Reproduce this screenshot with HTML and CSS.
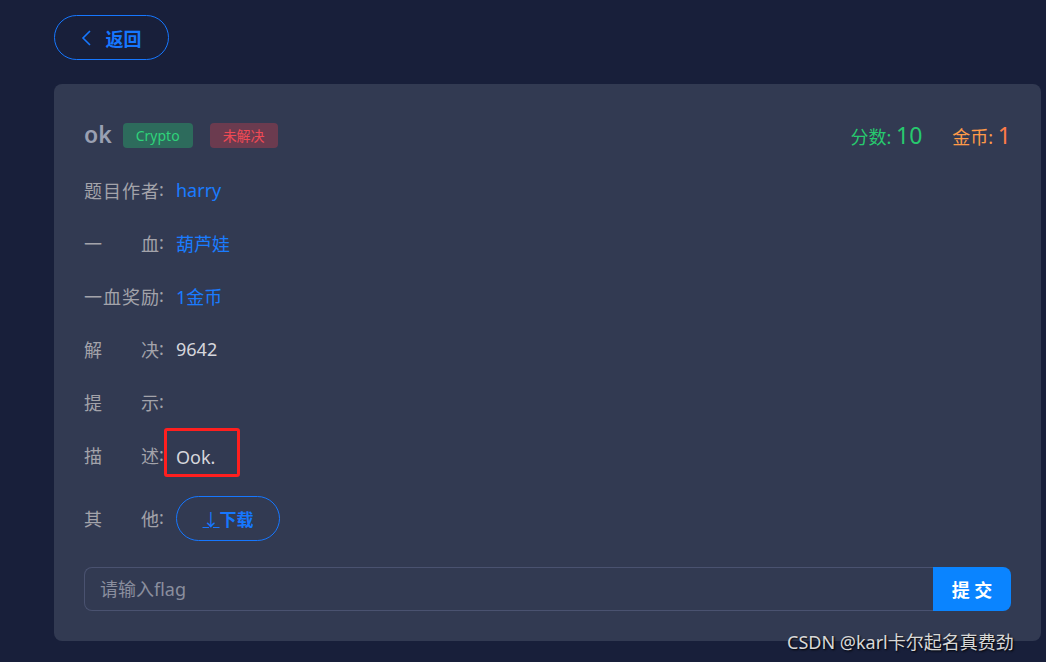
FILE: index.html
```html
<!DOCTYPE html>
<html lang="zh-CN">
<head>
    <meta charset="UTF-8">
    <meta name="viewport" content="width=device-width, initial-scale=1.0">
    <title>题目详情</title>
    <link rel="stylesheet" href="styles.css">
</head>
<body>
    <div class="page">
        <button class="btn-back">
            <svg width="14" height="18" viewBox="0 0 14 18"><path d="M10 2 L3 9 L10 16" fill="none" stroke="#1677ff" stroke-width="1.6"/></svg>
            <span>返回</span>
        </button>

        <div class="card">
            <div class="head">
                <div class="title">
                    <span class="name">ok</span>
                    <span class="tag tag-type">Crypto</span>
                    <span class="tag tag-state">未解决</span>
                </div>
                <div class="stats">
                    <span class="score">分数: <b>10</b></span>
                    <span class="coin">金币: <b>1</b></span>
                </div>
            </div>

            <div class="row"><span class="label"><i>题目作者</i>:</span><span class="val link">harry</span></div>
            <div class="row"><span class="label"><i>一血</i>:</span><span class="val link">葫芦娃</span></div>
            <div class="row"><span class="label"><i>一血奖励</i>:</span><span class="val link">1金币</span></div>
            <div class="row"><span class="label"><i>解决</i>:</span><span class="val">9642</span></div>
            <div class="row"><span class="label"><i>提示</i>:</span><span class="val"></span></div>
            <div class="row"><span class="label"><i>描述</i>:</span><span class="val desc">Ook.<span class="mark"></span></span></div>
            <div class="row row-other">
                <span class="label"><i>其他</i>:</span>
                <button class="btn-down"><span class="arrow">↓</span>下载</button>
            </div>

            <div class="submit">
                <input type="text" placeholder="请输入flag">
                <button>提 交</button>
            </div>
        </div>
    </div>
    <div class="watermark">CSDN @karl卡尔起名真费劲</div>
</body>
</html>
```

FILE: styles.css
```css
body {
    margin: 0;
    background: #181f3a;
    font-family: "Noto Sans", "Noto Sans CJK SC", sans-serif;
    width: 1046px;
    height: 662px;
    overflow: hidden;
    position: relative;
}
.page {
    padding: 15px 0 0 54px;
    width: 987px;
}
.btn-back {
    width: 115px;
    height: 45px;
    border: 1px solid #1677ff;
    border-radius: 23px;
    background: transparent;
    color: #1677ff;
    font-family: inherit;
    font-size: 18px;
    font-weight: bold;
    display: flex;
    align-items: center;
    justify-content: center;
    gap: 12px;
    padding: 0 2px 0 0;
    cursor: pointer;
}
.card {
    margin-top: 24px;
    background: #323a52;
    border-radius: 8px;
    padding: 26px 30px 30px 30px;
    height: 501px;
}
.head {
    display: flex;
    justify-content: space-between;
    align-items: center;
    height: 50px;
    margin-bottom: 3px;
}
.title {
    display: flex;
    align-items: center;
}
.name {
    font-size: 23px;
    font-weight: 600;
    color: #9aa0b2;
    margin-right: 11px;
    margin-top: -3px;
}
.tag {
    height: 25px;
    line-height: 25px;
    border-radius: 4px;
    font-size: 14px;
    padding: 0 13px;
}
.tag-type {
    background: #2d6b5c;
    color: #2fd37a;
}
.tag-state {
    background: #6b3b4f;
    color: #f04a55;
    margin-left: 17px;
}
.stats {
    display: flex;
    gap: 30px;
    font-size: 18px;
}
.stats b {
    font-weight: normal;
    font-size: 23px;
}
.score {
    color: #27c96e;
}
.coin {
    color: #ff9a48;
}
.coin b {
    color: #ff7a48;
}
.row {
    display: flex;
    align-items: center;
    height: 53px;
    font-size: 18px;
}
.label {
    color: #a3a3aa;
    width: 92px;
    display: flex;
}
.label i {
    font-style: normal;
    width: 75px;
    text-align: justify;
    text-align-last: justify;
}
.val {
    color: #d6d6dc;
    position: relative;
}
.link {
    color: #1a7cff;
}
.desc {
    top: 2px;
}
.mark {
    position: absolute;
    left: -12px;
    top: -17px;
    width: 70px;
    height: 43px;
    border: 3px solid #ff1f1f;
    border-radius: 3px;
}
.row-other {
    height: 74px;
}
.btn-down {
    width: 104px;
    height: 45px;
    border: 1px solid #1677ff;
    border-radius: 23px;
    background: transparent;
    color: #1677ff;
    font-family: inherit;
    font-size: 17px;
    font-weight: bold;
    display: flex;
    align-items: center;
    justify-content: center;
    cursor: pointer;
}
.arrow {
    font-weight: normal;
    text-decoration: underline;
}
.submit {
    display: flex;
    margin-top: 12px;
    height: 44px;
}
.submit input {
    flex: 1;
    background: transparent;
    border: 1px solid #4a5270;
    border-right: none;
    border-radius: 8px 0 0 8px;
    padding: 0 15px;
    font-family: inherit;
    font-size: 18px;
    color: #d6d6dc;
    outline: none;
}
.submit input::placeholder {
    color: #8a8e9e;
}
.submit button {
    width: 78px;
    border: none;
    background: #0a84ff;
    color: #fff;
    border-radius: 0 8px 8px 0;
    font-family: inherit;
    font-size: 18px;
    font-weight: bold;
    cursor: pointer;
}
.watermark {
    position: absolute;
    left: 787px;
    top: 628px;
    font-size: 18px;
    color: #d8d8d8;
    text-shadow: 1px 1px 2px #000;
}
```
